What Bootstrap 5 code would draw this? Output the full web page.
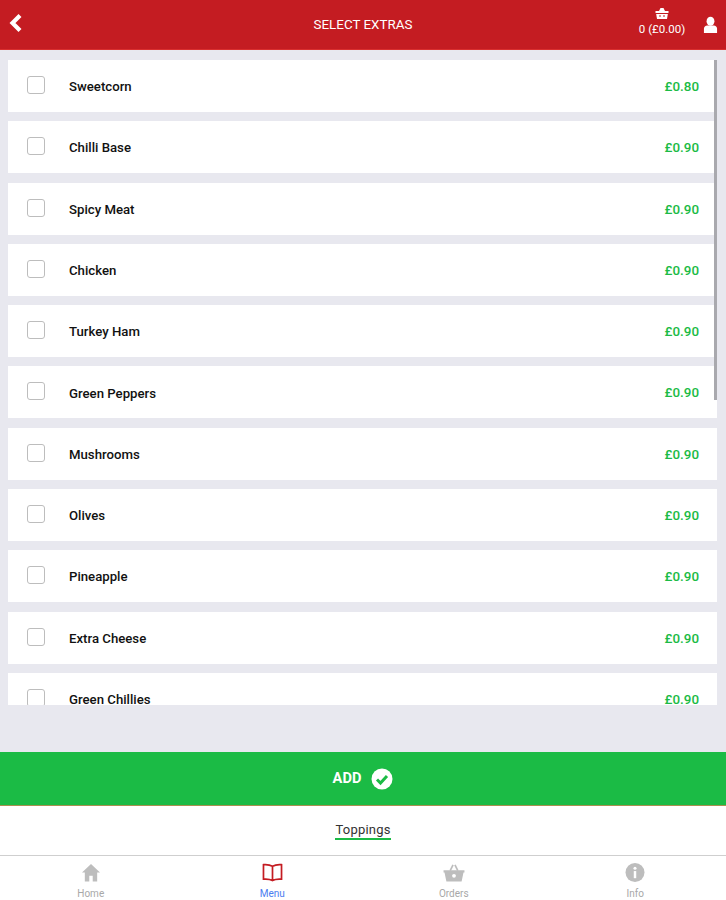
<!doctype html>
<html lang="en">

<head>
  <meta charset="utf-8">
  <meta name="viewport" content="width=device-width, initial-scale=1">
  <title>Select Extras</title>
  <link href="https://cdn.jsdelivr.net/npm/bootstrap@5.3.0/dist/css/bootstrap.min.css" rel="stylesheet">
  <style>
    html, body {
      height: 900px;
      overflow: hidden;
    }

    body {
      background-color: #e8e8ef;
      font-family: Roboto, "Liberation Sans", sans-serif;
      color: #111;
    }

    .app-header {
      height: 50px;
      background-color: #c41c22;
      border-bottom: 1px solid #d92f2f;
      color: #fff;
      padding: 0 8px;
    }

    .header-title {
      font-size: 13.4px;
      left: 0;
      right: 0;
      top: 15px;
      text-align: center;
    }

    .basket-box {
      font-size: 11.5px;
      line-height: 13px;
      width: 62px;
      margin-right: 10px;
      margin-bottom: 6px;
    }

    .basket-box svg {
      margin-bottom: 4px;
    }

    .extras-scroll {
      height: 655px;
      overflow: hidden;
      padding: 10px 9px 0 8px;
    }

    .extra-row {
      height: 52px;
      margin-bottom: 9.3px;
      background-color: #fff;
      padding: 0 18px 0 19px;
      font-size: 13.2px;
      font-weight: 500;
    }

    .extra-row span {
      padding-top: 2px;
    }

    .extra-row .form-check-input {
      width: 18px;
      height: 18px;
      margin: -2px 24px 0 0;
      border: 1.5px solid #bdbdbd;
      border-radius: 3px;
      flex-shrink: 0;
    }

    .extra-price {
      color: #1bbb45;
      font-size: 13.4px;
    }

    .scroll-thumb {
      position: absolute;
      top: 60px;
      left: 714px;
      width: 3px;
      height: 340px;
      background-color: #a9a9ae;
    }

    .spacer-band {
      height: 47px;
    }

    .add-btn {
      height: 54px;
      width: 100%;
      background-color: #1bbb45;
      border: 0;
      border-radius: 0;
      border-bottom: 1px solid #a9904f;
      color: #fff;
      font-size: 14.6px;
      font-weight: 700;
    }

    .add-btn:hover {
      background-color: #1bbb45;
      color: #fff;
    }

    .add-btn svg {
      margin-left: 2px;
    }

    .category-bar {
      height: 50px;
      background-color: #fff;
      border-bottom: 1px solid #cfcfcf;
      font-size: 13px;
      letter-spacing: .2px;
      color: #333;
    }

    .category-bar span {
      border-bottom: 2.5px solid #1bbb45;
      line-height: 14px;
      padding-bottom: 1px;
      margin-top: 1px;
    }

    .tab-bar {
      height: 44px;
      background-color: #fff;
    }

    .tab-item {
      flex: 1 1 0;
      font-size: 10px;
      line-height: 11px;
      color: #a8a8a8;
      padding-top: 7px;
    }

    .tab-item svg {
      display: block;
      height: 19px;
      margin: 0 auto 6px;
    }

    .tab-item.active-tab {
      color: #4c7df0;
    }
  </style>
</head>

<body>
  <header class="app-header position-relative d-flex align-items-center justify-content-between">
    <svg width="16" height="20" viewBox="0 0 16 20" class="mb-1" aria-label="Back">
      <path d="M12 2.500 4.500 10 12 17.500" fill="none" stroke="#fff" stroke-width="4.200" />
    </svg>
    <div class="header-title position-absolute">SELECT EXTRAS</div>
    <div class="d-flex align-items-center" style="z-index:1">
      <div class="basket-box text-center">
        <svg width="14" height="12" viewBox="0 0 14 12" class="d-block mx-auto">
          <path d="M4 4 5.500 1h3L10 4h3.500v2H13l-1 6H2L1 6H.5V4z" fill="#fff" />
          <path d="M1 6.500h12M5 8v2M9 8v2" stroke="#c41c22" stroke-width="1" />
        </svg>
        0 (£0.00)
      </div>
      <svg width="15" height="18" viewBox="0 0 16 18" aria-label="Account">
        <ellipse cx="8" cy="5" rx="4.200" ry="4.800" fill="#fff" />
        <path d="M1 17.500V13c0-2 1.500-3.500 3.500-3.500h7c2 0 3.500 1.500 3.500 3.500v4.500z" fill="#fff" />
      </svg>
    </div>
  </header>

  <div class="extras-scroll">
    <div class="extra-row d-flex align-items-center">
      <input class="form-check-input" type="checkbox" aria-label="Sweetcorn">
      <span class="flex-grow-1">Sweetcorn</span>
      <span class="extra-price">£0.80</span>
    </div>
    <div class="extra-row d-flex align-items-center">
      <input class="form-check-input" type="checkbox" aria-label="Chilli Base">
      <span class="flex-grow-1">Chilli Base</span>
      <span class="extra-price">£0.90</span>
    </div>
    <div class="extra-row d-flex align-items-center">
      <input class="form-check-input" type="checkbox" aria-label="Spicy Meat">
      <span class="flex-grow-1">Spicy Meat</span>
      <span class="extra-price">£0.90</span>
    </div>
    <div class="extra-row d-flex align-items-center">
      <input class="form-check-input" type="checkbox" aria-label="Chicken">
      <span class="flex-grow-1">Chicken</span>
      <span class="extra-price">£0.90</span>
    </div>
    <div class="extra-row d-flex align-items-center">
      <input class="form-check-input" type="checkbox" aria-label="Turkey Ham">
      <span class="flex-grow-1">Turkey Ham</span>
      <span class="extra-price">£0.90</span>
    </div>
    <div class="extra-row d-flex align-items-center">
      <input class="form-check-input" type="checkbox" aria-label="Green Peppers">
      <span class="flex-grow-1">Green Peppers</span>
      <span class="extra-price">£0.90</span>
    </div>
    <div class="extra-row d-flex align-items-center">
      <input class="form-check-input" type="checkbox" aria-label="Mushrooms">
      <span class="flex-grow-1">Mushrooms</span>
      <span class="extra-price">£0.90</span>
    </div>
    <div class="extra-row d-flex align-items-center">
      <input class="form-check-input" type="checkbox" aria-label="Olives">
      <span class="flex-grow-1">Olives</span>
      <span class="extra-price">£0.90</span>
    </div>
    <div class="extra-row d-flex align-items-center">
      <input class="form-check-input" type="checkbox" aria-label="Pineapple">
      <span class="flex-grow-1">Pineapple</span>
      <span class="extra-price">£0.90</span>
    </div>
    <div class="extra-row d-flex align-items-center">
      <input class="form-check-input" type="checkbox" aria-label="Extra Cheese">
      <span class="flex-grow-1">Extra Cheese</span>
      <span class="extra-price">£0.90</span>
    </div>
    <div class="extra-row d-flex align-items-center">
      <input class="form-check-input" type="checkbox" aria-label="Green Chillies">
      <span class="flex-grow-1">Green Chillies</span>
      <span class="extra-price">£0.90</span>
    </div>
  </div>
  <div class="scroll-thumb"></div>

  <div class="spacer-band"></div>

  <button class="btn add-btn d-flex align-items-center justify-content-center gap-2 p-0">
    ADD
    <svg width="22" height="22" viewBox="0 0 22 22">
      <circle cx="11" cy="11" r="10.500" fill="#fff" />
      <path d="M6 11.500 9.500 15 16 8" fill="none" stroke="#1bbb45" stroke-width="3" />
    </svg>
  </button>

  <div class="category-bar d-flex align-items-center justify-content-center">
    <span>Toppings</span>
  </div>

  <nav class="tab-bar d-flex text-center">
    <div class="tab-item">
      <svg viewBox="0 0 20 20" width="20">
        <path d="M10 1 0.500 10H3.500v9.500h4.700v-6h3.600v6h4.700V10h3z" fill="#bdbdbd" />
      </svg>
      Home
    </div>
    <div class="tab-item active-tab">
      <svg viewBox="0 0 22 20" width="21">
        <path d="M11 3.500C8.500 2 5 1.500 1.500 1.800V17c3.500-.3 7 0 9.500 1.500 2.500-1.500 6-1.800 9.500-1.500V1.800C17 1.500 13.500 2 11 3.500zM11 3.500V18.500" fill="none" stroke="#c41c22" stroke-width="1.800" />
      </svg>
      Menu
    </div>
    <div class="tab-item">
      <svg viewBox="0 0 22 20" width="22">
        <path d="M7 8 10 2M15 8 12 2" stroke="#bdbdbd" stroke-width="1.800" fill="none" />
        <path d="M0 7.500h22V10h-1l-2 9.500H3L1 10H0z" fill="#bdbdbd" />
        <circle cx="11" cy="13.500" r="2" fill="#fff" />
      </svg>
      Orders
    </div>
    <div class="tab-item">
      <svg viewBox="0 0 20 20" width="20">
        <circle cx="10" cy="10" r="10" fill="#bdbdbd" />
        <rect x="8.700" y="8.500" width="2.600" height="7.500" fill="#fff" />
        <circle cx="10" cy="5.500" r="1.600" fill="#fff" />
      </svg>
      Info
    </div>
  </nav>

  <script src="https://cdn.jsdelivr.net/npm/bootstrap@5.3.0/dist/js/bootstrap.bundle.min.js"></script>
</body>

</html>
